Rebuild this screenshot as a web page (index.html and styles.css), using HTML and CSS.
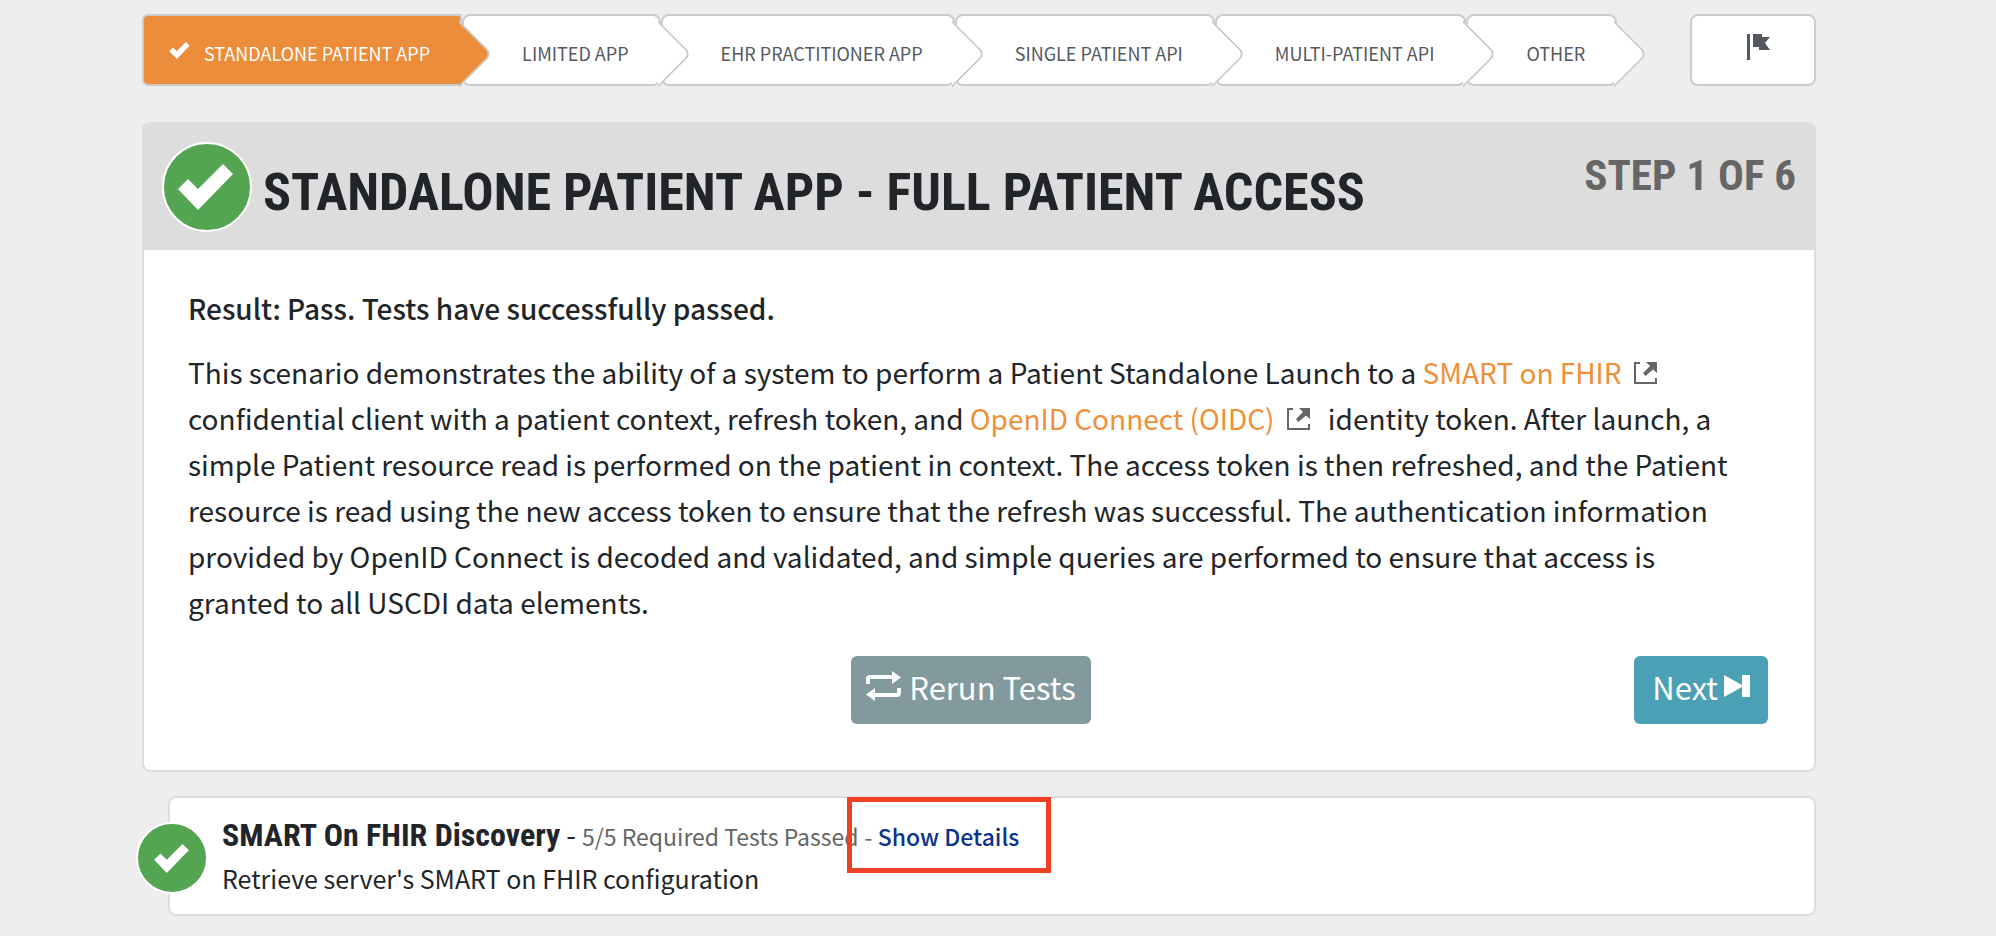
FILE: index.html
```html
<!DOCTYPE html>
<html lang="en">
<head>
<meta charset="utf-8">
<title>Standalone Patient App - Full Patient Access</title>
<link rel="stylesheet" href="styles.css">
</head>
<body>
<svg class="defs" aria-hidden="true">
  <symbol id="check" viewBox="0 0 55 46"><path d="M0 25 10 15 20 25 45 0 55 10 20 46Z"/></symbol>
  <symbol id="external" viewBox="0 0 23 22"><path d="M0 0H6V2H2V20H21V16H23V22H0ZM12 0H23V11L19 7.500 11.500 14 9 11 16 4Z"/></symbol>
</svg>
<main class="page">
  <nav class="wizard" aria-label="Steps">
    <ol class="steps">
      <li class="step step-current"><a class="step-link" href="#standalone"><svg class="step-check" aria-hidden="true"><use href="#check"/></svg>STANDALONE PATIENT APP</a></li>
      <li class="step"><a class="step-link" href="#limited">LIMITED APP</a></li>
      <li class="step"><a class="step-link" href="#ehr">EHR PRACTITIONER APP</a></li>
      <li class="step"><a class="step-link" href="#single">SINGLE PATIENT API</a></li>
      <li class="step"><a class="step-link" href="#multi">MULTI-PATIENT API</a></li>
      <li class="step"><a class="step-link" href="#other">OTHER</a></li>
    </ol>
    <a class="report" href="#report" aria-label="Report"><svg class="flag" viewBox="0 0 26 26" aria-hidden="true"><path d="M0 0H3V26H0ZM6 0H15V3H23L18 9 23 16H12V13H6Z"/></svg></a>
  </nav>

  <section class="card">
    <header class="card-header">
      <span class="badge badge-large"><svg class="badge-check" aria-hidden="true"><use href="#check"/></svg></span>
      <h1 class="title">STANDALONE PATIENT APP - FULL PATIENT ACCESS</h1>
      <span class="count">STEP 1 OF 6</span>
    </header>
    <div class="card-body">
      <p class="result">Result: Pass. Tests have successfully passed.</p>
      <p class="description">This scenario demonstrates the ability of a system to perform a Patient Standalone Launch to a <a class="ext" href="#smart">SMART on FHIR<svg class="ext-icon" aria-hidden="true"><use href="#external"/></svg></a> confidential client with a patient context, refresh token, and <a class="ext" href="#oidc">OpenID Connect (OIDC)<svg class="ext-icon" aria-hidden="true"><use href="#external"/></svg></a> identity token. After launch, a simple Patient resource read is performed on the patient in context. The access token is then refreshed, and the Patient resource is read using the new access token to ensure that the refresh was successful. The authentication information provided by OpenID Connect is decoded and validated, and simple queries are performed to ensure that access is granted to all USCDI data elements.</p>
      <div class="actions">
        <button class="button rerun" type="button"><svg class="rerun-icon" viewBox="0 0 35 30" aria-hidden="true"><path d="M0 13V8Q0 4 4 4H26V0L35 6.500 26 13V8H4V13ZM35 17V22Q35 26 31 26H9V30L0 23.500 9 17V22H31V17Z"/></svg>Rerun Tests</button>
        <button class="button next" type="button">Next<svg class="next-icon" viewBox="0 0 26 22" aria-hidden="true"><path d="M0 0 18 10V0H26V22H18V12L0 22Z"/></svg></button>
      </div>
    </div>
  </section>

  <section class="group">
    <span class="badge badge-small"><svg class="badge-check" aria-hidden="true"><use href="#check"/></svg></span>
    <div class="group-line">
      <h2 class="group-title">SMART On FHIR Discovery</h2>
      <span>-</span>
      <span class="status">5/5 Required Tests Passed</span>
      <span class="status details-wrap">- <a class="details" href="#details">Show Details</a></span>
    </div>
    <p class="group-text">Retrieve server's SMART on FHIR configuration</p>
  </section>
</main>
</body>
</html>
```
FILE: styles.css
```css
* { box-sizing: border-box; }
body {
  margin: 0;
  background: #eee;
  color: #212529;
  font-family: "Source Sans Pro", "Noto Sans CJK SC", "Noto Sans", sans-serif;
  font-size: 28px;
}
h1, h2, p, ol { margin: 0; padding: 0; }
a { text-decoration: none; }
svg { fill: currentColor; flex: none; }
.defs { position: absolute; width: 0; height: 0; }
.page { padding: 14px 180px 20px 142px; }

.wizard { display: flex; justify-content: space-between; height: 72px; margin-bottom: 36px; }
.steps { display: flex; list-style: none; }
.step { position: relative; border: 2px solid #ccc; border-radius: 8px; background: #fff; }
.step::after {
  content: "";
  position: absolute;
  z-index: 1;
  top: 14px;
  right: -23px;
  width: 46px;
  height: 46px;
  border: solid #ccc;
  border-width: 2px 2px 0 0;
  border-radius: 0 8px 0 0;
  background: inherit;
  transform: rotate(45deg);
  clip-path: polygon(0 0, 100% 0, 100% 100%);
}
.step-link {
  position: relative;
  z-index: 2;
  display: flex;
  align-items: center;
  height: 100%;
  padding: 5px 30px 0 58px;
  color: #54585f;
  font-size: 18px;
  white-space: nowrap;
}
.step-current { border-radius: 6px 0 0 6px; background: #eb8d3a; }
.step-current .step-link { padding-left: 25px; color: #fff; }
.step-check { width: 21px; height: 17px; margin: 0 14px 5px 0; }
.report { display: flex; justify-content: center; width: 126px; padding: 18px 0 0 14px; border: 2px solid #ccc; border-radius: 8px; background: #fff; color: #54585f; }
.flag { width: 26px; height: 26px; }

.card { overflow: hidden; border: 2px solid #ddd; border-radius: 8px; background: #fff; }
.card-header { display: flex; align-items: flex-start; height: 126px; padding: 18px; background: #ddd; font-family: "Roboto Condensed", "Liberation Sans Narrow", Roboto, sans-serif; }
.badge { display: grid; flex: none; place-items: center; border: 2px solid #fff; border-radius: 50%; background: #53a551; color: #fff; }
.badge-large { width: 90px; height: 90px; padding-right: 4px; }
.badge-large .badge-check { width: 55px; height: 46px; }
.title { flex: 1; margin: 19px 0 0 11px; font-size: 52px; line-height: 64px; white-space: nowrap; }
.count { color: #666; font-size: 43px; font-weight: 700; line-height: 66px; white-space: nowrap; }
.card-body { padding: 35px 46px 46px 44px; }
.result { margin-bottom: 18px; font-weight: 500; line-height: 46px; }
.description { padding-right: 18px; line-height: 46px; }
.ext { color: #ef8f37; }
.ext-icon { width: 23px; height: 22px; margin: 0 12px; color: #666; }
.actions { display: grid; grid-template-columns: 1fr auto 1fr; margin-top: 31px; }
.button { display: flex; align-items: center; height: 68px; padding: 0 18px 8px; border: 0; border-radius: 6px; color: #fff; font-family: inherit; font-size: 31px; }
.rerun { grid-column: 2; gap: 8px; margin-right: 14px; padding: 0 15px 8px; background: #82999e; }
.rerun-icon { width: 35px; height: 30px; }
.next { justify-self: end; gap: 6px; background: #4aa0b5; }
.next-icon { width: 26px; height: 22px; }

.group { position: relative; margin: 24px 0 0 26px; padding: 15px 53px 15px 52px; border: 2px solid #ddd; border-radius: 8px; background: #fff; }
.badge-small { position: absolute; top: 24px; left: -34px; width: 72px; height: 72px; padding-right: 2px; }
.badge-small .badge-check { width: 35px; height: 29px; }
.group-line { display: flex; align-items: baseline; gap: 6px; line-height: 42px; }
.group-title { font-family: "Roboto Condensed", "Liberation Sans Narrow", Roboto, sans-serif; font-size: 32px; }
.status { color: #666; font-size: 23px; }
.details-wrap { position: relative; }
.details-wrap::after { content: ""; position: absolute; inset: -18px -32px -16px -18px; border: 5px solid #ee4023; pointer-events: none; }
.details { color: #0b338c; font-weight: 500; }
.group-text { font-size: 25px; line-height: 42px; }
```
